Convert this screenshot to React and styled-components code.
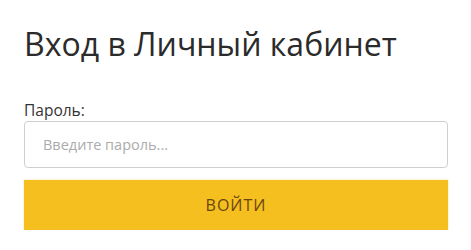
import styled, { createGlobalStyle } from "styled-components";

const GlobalStyle = createGlobalStyle`
  body {
    margin: 0;
    background: #fff;
    font-family: "Open Sans", "Liberation Sans", sans-serif;
  }
`;

const LoginWrapper = styled.section`
  width: 424px;
  padding: 20px 23px 0 24px;
`;

const Title = styled.h1`
  margin: 0;
  font-size: 32px;
  font-weight: 400;
  line-height: 48px;
  color: #2b2b2b;
`;

const Form = styled.form`
  margin-top: 32px;
  display: flex;
  flex-direction: column;
`;

const Label = styled.label`
  font-size: 15.5px;
  line-height: 20px;
  color: #333;
`;

const Input = styled.input`
  box-sizing: border-box;
  margin-top: 1px;
  width: 100%;
  height: 47px;
  padding: 0 18px;
  border: 1px solid #cfcfcf;
  border-radius: 4px;
  font-family: inherit;
  font-size: 14.5px;
  color: #333;
  outline: none;
  &::placeholder {
    color: #ababab;
  }
`;

const SubmitButton = styled.button`
  margin-top: 12px;
  width: 100%;
  height: 50px;
  border: none;
  background-color: #f5c01f;
  box-shadow: 0 0 2px rgba(245, 200, 40, 0.5);
  font-family: inherit;
  font-size: 16px;
  letter-spacing: 1px;
  color: #6b4612;
  cursor: pointer;
`;

const App = () => {
  return (
    <>
      <GlobalStyle />
      <LoginWrapper>
        <Title>Вход в Личный кабинет</Title>
        <Form onSubmit={(e) => e.preventDefault()}>
          <Label htmlFor="password">Пароль:</Label>
          <Input id="password" type="password" placeholder="Введите пароль..." />
          <SubmitButton type="submit">ВОЙТИ</SubmitButton>
        </Form>
      </LoginWrapper>
    </>
  );
};

export default App;
